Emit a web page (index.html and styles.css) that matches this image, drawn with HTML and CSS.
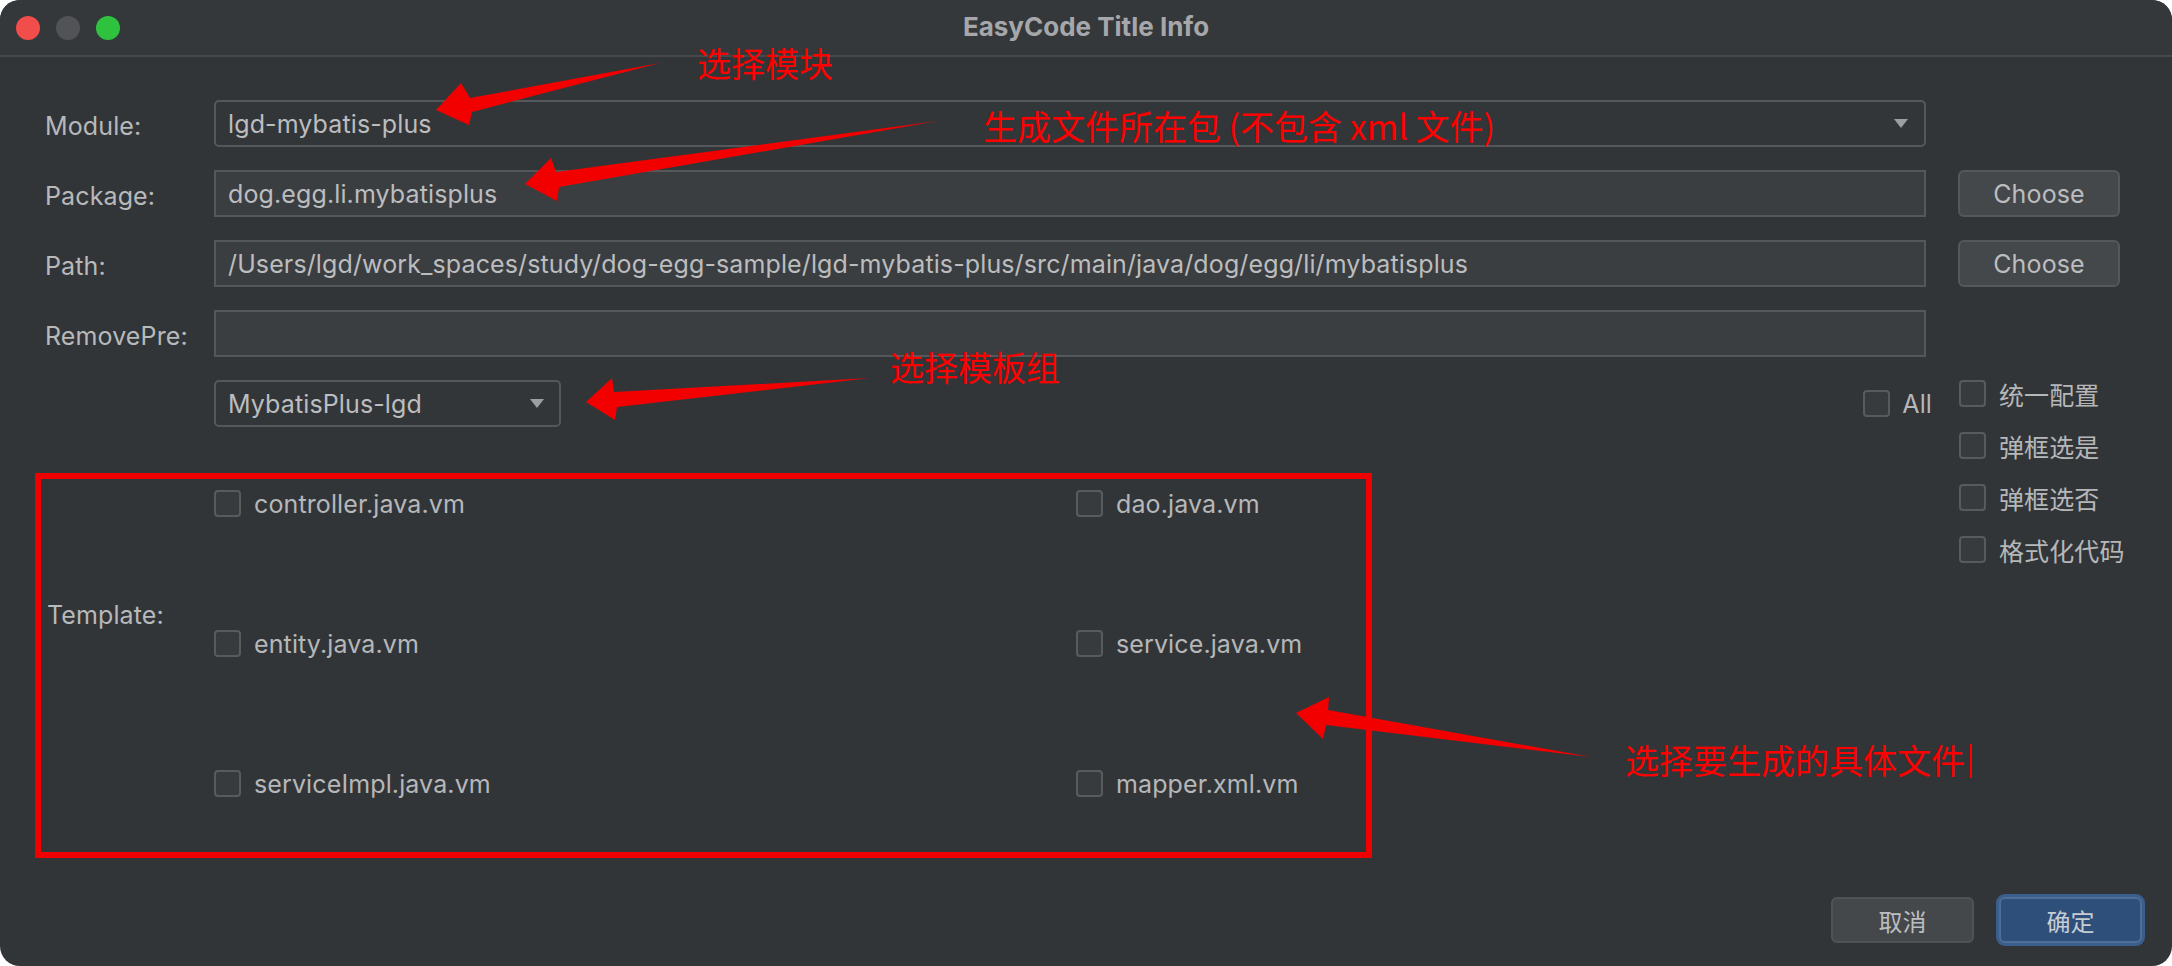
FILE: index.html
```html
<!DOCTYPE html>
<html lang="zh">
<head>
<meta charset="utf-8">
<title>EasyCode Title Info</title>
<link rel="stylesheet" href="styles.css">
</head>
<body>
<div class="window">
  <div class="titlebar">
    <div class="lights">
      <span class="light red"></span>
      <span class="light gray"></span>
      <span class="light green"></span>
    </div>
    <div class="title">EasyCode Title Info</div>
  </div>
  <div class="body">
    <div class="form">
      <label class="lbl">Module:</label>
      <div class="combo wide"><span>lgd-mybatis-plus</span><span class="caret"></span></div>
      <div></div>

      <label class="lbl">Package:</label>
      <div class="field">dog.egg.li.mybatisplus</div>
      <button class="btn">Choose</button>

      <label class="lbl">Path:</label>
      <div class="field">/Users/lgd/work_spaces/study/dog-egg-sample/lgd-mybatis-plus/src/main/java/dog/egg/li/mybatisplus</div>
      <button class="btn">Choose</button>

      <label class="lbl">RemovePre:</label>
      <div class="field"></div>
      <div></div>

      <div></div>
      <div class="group-row">
        <div class="combo group"><span>MybatisPlus-lgd</span><span class="caret"></span></div>
        <div class="check all"><span class="box"></span><span>All</span></div>
      </div>
      <div class="options">
        <div class="check"><span class="box"></span><span>统一配置</span></div>
        <div class="check"><span class="box"></span><span>弹框选是</span></div>
        <div class="check"><span class="box"></span><span>弹框选否</span></div>
        <div class="check"><span class="box"></span><span>格式化代码</span></div>
      </div>

      <label class="lbl tpl-label">Template:</label>
      <div class="templates">
        <div class="check"><span class="box"></span><span>controller.java.vm</span></div>
        <div class="check"><span class="box"></span><span>dao.java.vm</span></div>
        <div class="check"><span class="box"></span><span>entity.java.vm</span></div>
        <div class="check"><span class="box"></span><span>service.java.vm</span></div>
        <div class="check"><span class="box"></span><span>serviceImpl.java.vm</span></div>
        <div class="check"><span class="box"></span><span>mapper.xml.vm</span></div>
      </div>
    </div>
    <div class="footer">
      <button class="btn-foot">取消</button>
      <button class="btn-foot primary">确定</button>
    </div>
  </div>

  <svg class="arrows" width="2172" height="966" viewBox="0 0 2172 966">
    <polygon points="660,63 470,98 461,83 436,110 469,125 472,112" />
    <polygon points="938,121 556,172 551,158 525,184 557,201 559,187" />
    <polygon points="870,378 614,392 612,378 586,402 615,420 617,407" />
    <polygon points="1591,757 1328,710 1329,697 1296,713 1323,739 1326,725" />
  </svg>
  <div class="redbox"></div>
  <div class="note n1">选择模块</div>
  <div class="note n2">生成文件所在包 (不包含 xml 文件)</div>
  <div class="note n3">选择模板组</div>
  <div class="note n4">选择要生成的具体文件</div>
  <div class="cursor"></div>
</div>
</body>
</html>
```
FILE: styles.css
```css
* { box-sizing: border-box; }
html, body { margin: 0; padding: 0; background: #ffffff; }
body {
  font-family: Inter, "Noto Sans CJK SC", sans-serif;
  font-size: 25px;
  letter-spacing: 0.12px;
  color: #bbbbbb;
}
.window {
  position: relative;
  width: 2172px;
  height: 966px;
  background: #323538;
  border-radius: 20px;
  overflow: hidden;
  display: flex;
  flex-direction: column;
}
.titlebar {
  position: relative;
  height: 57px;
  flex: none;
  border-bottom: 2px solid #46494c;
  background: #35383b;
  display: flex;
  align-items: center;
  justify-content: center;
}
.lights {
  position: absolute;
  left: 16px;
  top: 16px;
  display: flex;
  gap: 16px;
}
.light { width: 24px; height: 24px; border-radius: 50%; display: block; }
.light.red { background: #f04d4b; }
.light.gray { background: #525356; }
.light.green { background: #2fc23f; }
.title {
  font-weight: 700;
  font-size: 26px;
  letter-spacing: 0;
  color: #a5a7aa;
  margin-top: -2px;
}
.body {
  flex: 1;
  display: flex;
  flex-direction: column;
  padding: 43px 0 23px 45px;
}
.form {
  display: grid;
  grid-template-columns: 169px 1712px 194px;
  grid-template-rows: 47px 47px 47px 47px 47px auto;
  column-gap: 0;
  row-gap: 23px;
}
.form > .btn { margin-left: 32px; }
.form > .options { margin-left: 33px; }
.lbl {
  display: flex;
  align-items: center;
  color: #b8b9bb;
  padding-top: 4px;
  white-space: nowrap;
}
.field, .combo {
  height: 47px;
  border: 2px solid #55585b;
  display: flex;
  align-items: center;
  padding: 0 12px;
  color: #bcbdbf;
  white-space: nowrap;
  overflow: hidden;
}
.field { background: #3b3e41; }
.combo {
  background: #333639;
  border-radius: 5px;
  justify-content: space-between;
  padding-right: 16px;
}
.caret {
  width: 0;
  height: 0;
  border-left: 7px solid transparent;
  border-right: 7px solid transparent;
  border-top: 9px solid #9c9ea1;
}
.group-row {
  display: flex;
  align-items: center;
  justify-content: space-between;
}
.combo.group { width: 347px; padding-right: 15px; }
.check {
  display: flex;
  align-items: center;
  gap: 13px;
  height: 27px;
  color: #b6b7b9;
  white-space: nowrap;
}
.box {
  width: 27px;
  height: 27px;
  flex: none;
  border: 2px solid #585b5e;
  border-radius: 4px;
  background: #383b3e;
}
.check.all { margin-right: -6px; gap: 12px; }
.options {
  grid-row: 5 / span 2;
  grid-column: 3;
  display: flex;
  flex-direction: column;
  gap: 25px;
}
.options .check { font-size: 25px; }
.tpl-label {
  align-self: start;
  margin-top: 151px;
  margin-left: 2px;
  height: 27px;
  padding-top: 0;
}
.templates {
  margin-top: 40px;
  display: grid;
  grid-template-columns: 862px 1fr;
  row-gap: 113px;
  align-content: start;
}
.btn {
  height: 47px;
  border: 2px solid #55585b;
  border-radius: 6px;
  background: #45484b;
  color: #bbbdbf;
  font: inherit;
  letter-spacing: inherit;
  padding: 0;
}
.footer {
  margin-top: auto;
  display: flex;
  justify-content: flex-end;
  gap: 25px;
  padding-right: 30px;
}
.btn-foot {
  width: 143px;
  height: 46px;
  border: 2px solid #505356;
  border-radius: 6px;
  background: #45484b;
  color: #bbbdbf;
  font: inherit;
  font-size: 24px;
  padding: 0;
}
.btn-foot.primary {
  background: #2f4f7b;
  border-color: #4d6e96;
  box-shadow: 0 0 0 3px #3a5f8f;
  color: #c6ccd4;
}
.arrows {
  position: absolute;
  left: 0;
  top: 0;
  pointer-events: none;
}
.arrows polygon { fill: #f20000; }
.redbox {
  position: absolute;
  left: 35px;
  top: 473px;
  width: 1337px;
  height: 385px;
  border: 6px solid #f00000;
  pointer-events: none;
}
.note {
  position: absolute;
  font-family: "Noto Sans CJK SC", sans-serif;
  font-size: 34px;
  line-height: 34px;
  letter-spacing: 0;
  color: #ff0000;
  white-space: nowrap;
}
.n1 { left: 697px; top: 46px; }
.n2 { left: 983px; top: 109px; }
.n3 { left: 890px; top: 350px; }
.n4 { left: 1625px; top: 743px; }
.cursor {
  position: absolute;
  left: 1970px;
  top: 744px;
  width: 2px;
  height: 34px;
  background: #ff0000;
}
```
